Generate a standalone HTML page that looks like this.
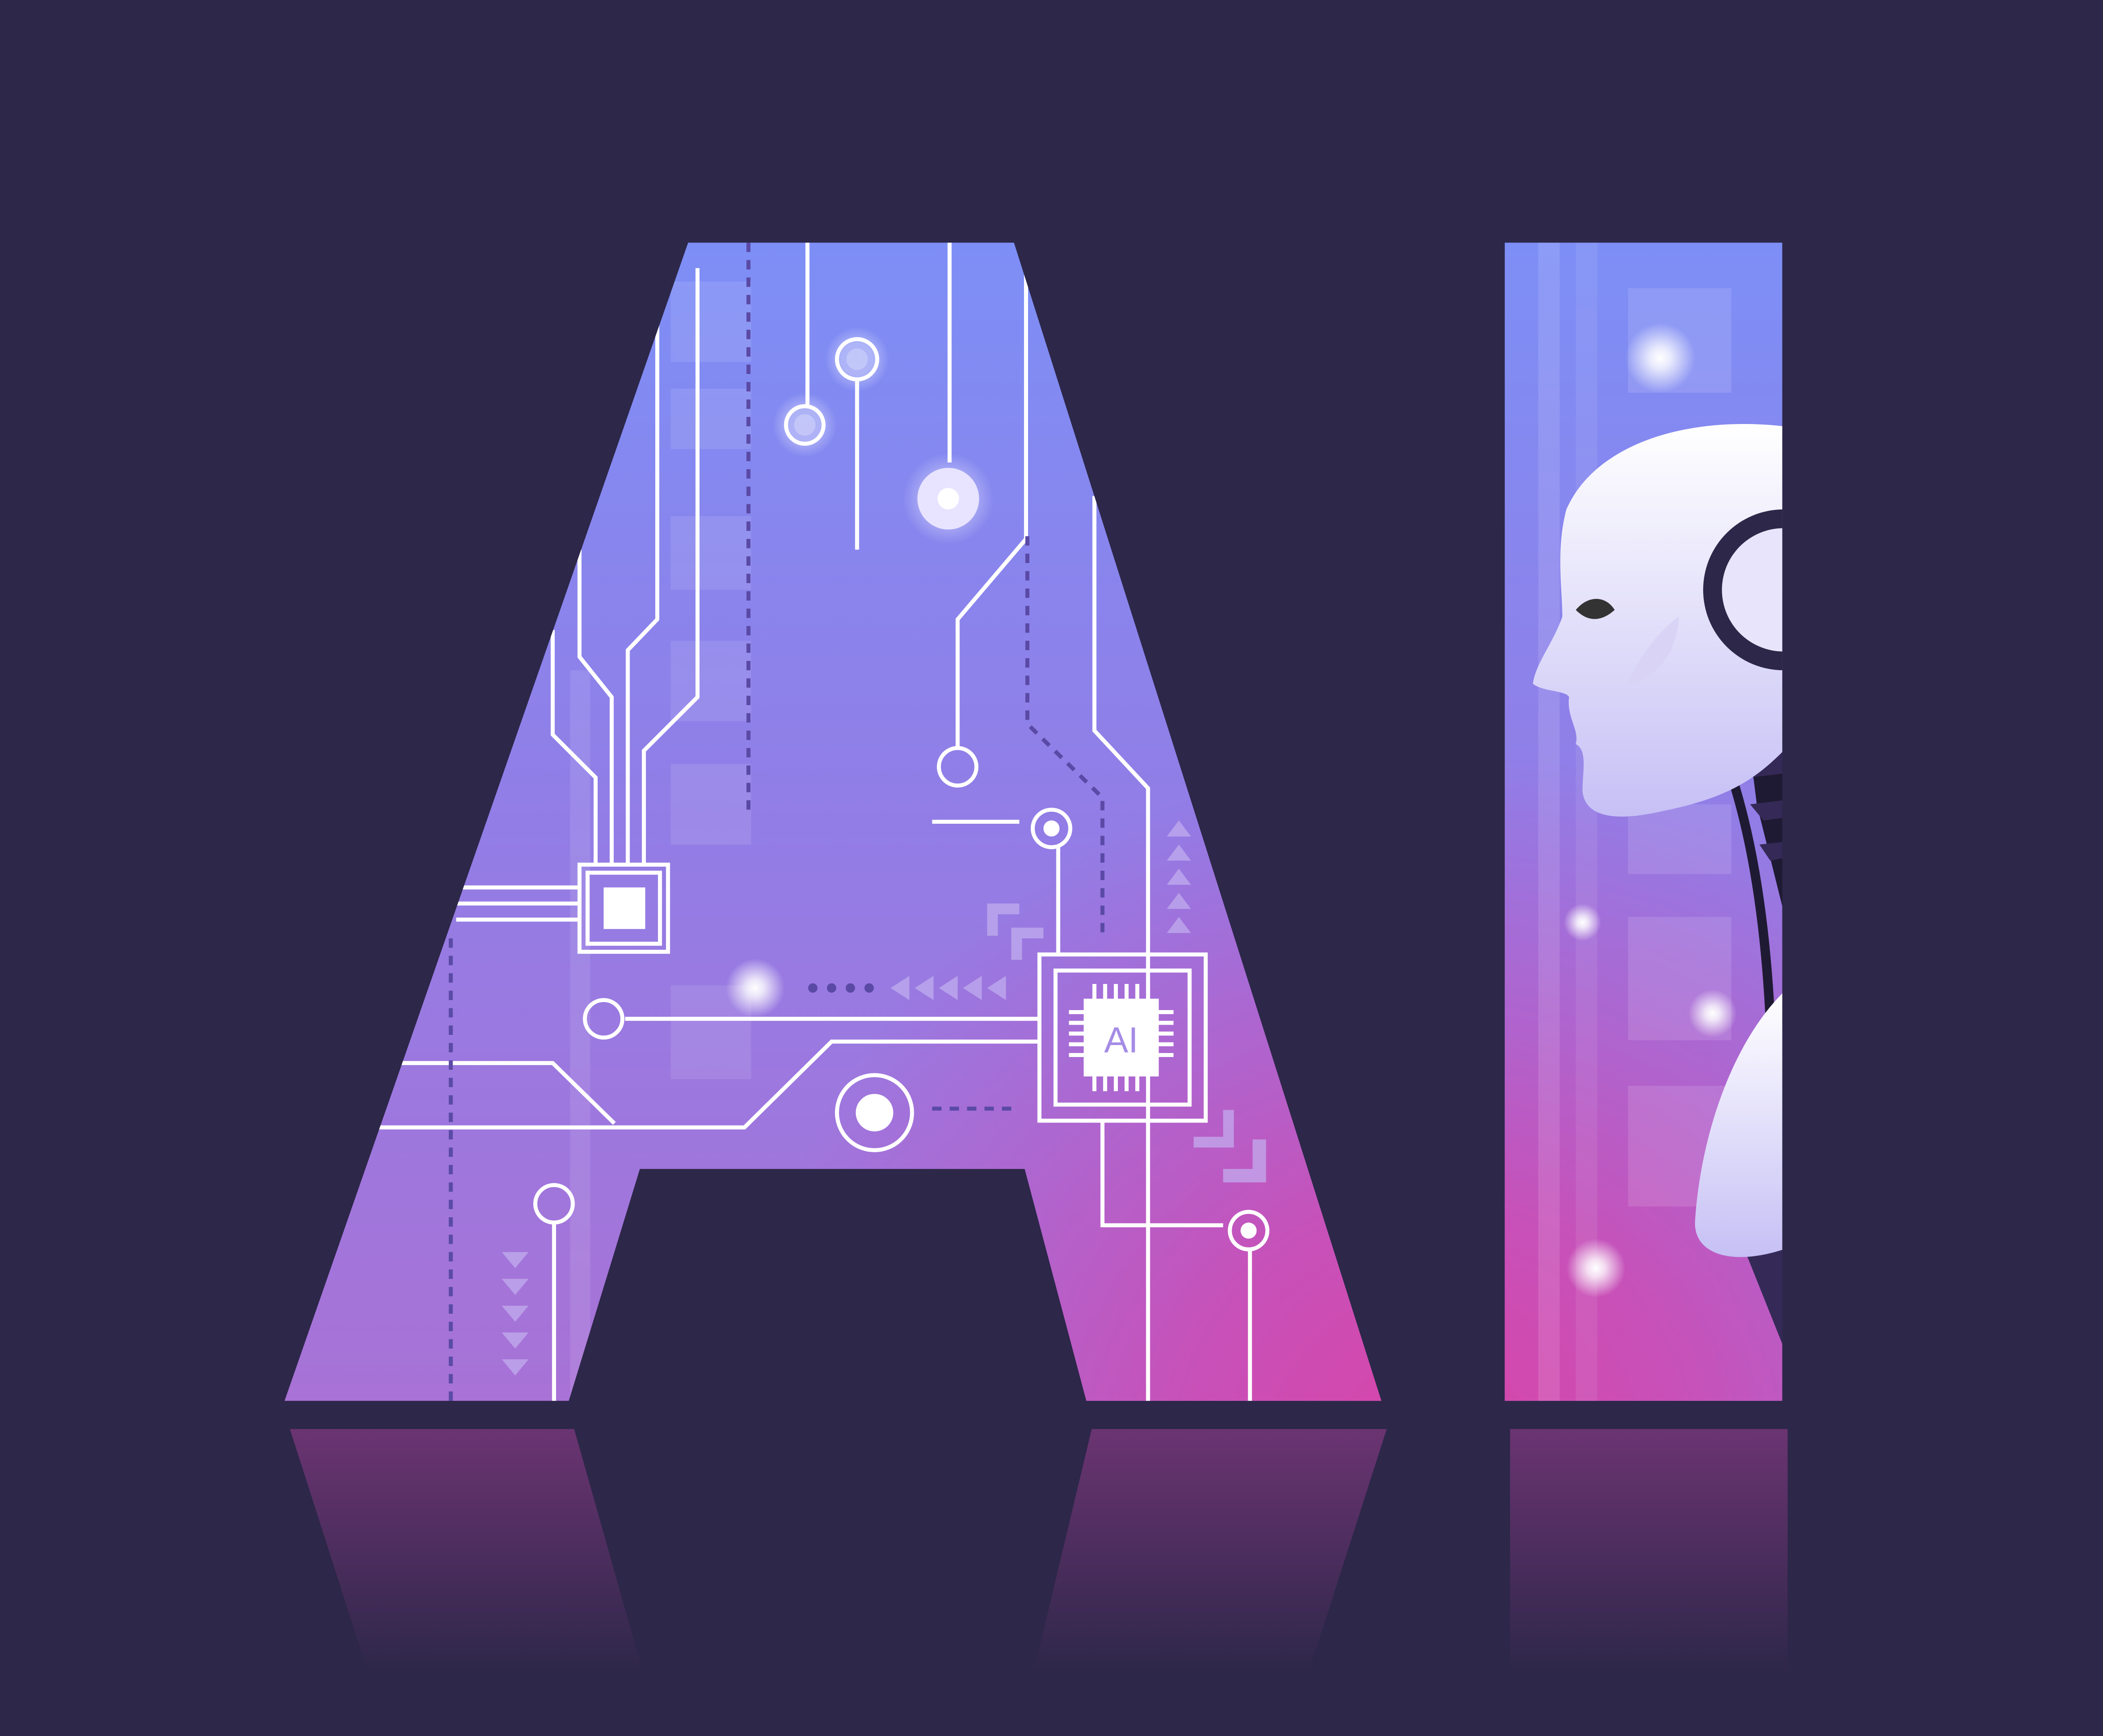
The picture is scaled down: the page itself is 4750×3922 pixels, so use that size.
<!DOCTYPE html>
<html><head><meta charset="utf-8"><style>html,body{margin:0;padding:0;background:#2d2749;overflow:hidden}svg{display:block}</style></head><body>
<svg width="4750" height="3922" viewBox="0 0 1568 1295" xmlns="http://www.w3.org/2000/svg">
<defs>
<linearGradient id="g" gradientUnits="userSpaceOnUse" x1="0" y1="181" x2="0" y2="1045">
<stop offset="0" stop-color="#7d8ff6"/><stop offset="0.5" stop-color="#927de6"/><stop offset="1" stop-color="#a872d6"/>
</linearGradient>
<radialGradient id="pk" gradientUnits="userSpaceOnUse" cx="1070" cy="1080" r="520">
<stop offset="0" stop-color="#d944a8" stop-opacity="1"/><stop offset="0.35" stop-color="#d048b0" stop-opacity="0.8"/><stop offset="1" stop-color="#c24cc0" stop-opacity="0"/>
</radialGradient>
<linearGradient id="r" x1="0" y1="0" x2="0" y2="1">
<stop offset="0" stop-color="#6b3472"/><stop offset="1" stop-color="#2d2749" stop-opacity="1"/>
</linearGradient>
<linearGradient id="h" x1="0" y1="0" x2="0" y2="1">
<stop offset="0" stop-color="#ffffff"/><stop offset="1" stop-color="#c6c0f5"/>
</linearGradient>
<radialGradient id="glow"><stop offset="0" stop-color="#fff"/><stop offset="0.3" stop-color="#fff" stop-opacity="0.8"/><stop offset="1" stop-color="#fff" stop-opacity="0"/></radialGradient>
<radialGradient id="sg"><stop offset="0.5" stop-color="#fff" stop-opacity="0.35"/><stop offset="1" stop-color="#fff" stop-opacity="0"/></radialGradient>
<clipPath id="ca"><path fill-rule="evenodd" d="M513 181 L756 181 L1030 1045 L810 1045 L764 872 L477 872 L424 1045 L212 1045 Z M630 375 L720 712 L525 712 Z"/></clipPath>
<clipPath id="ci"><rect x="1122" y="181" width="207" height="864"/></clipPath>
</defs>
<rect width="1568" height="1295" fill="#2d2749"/>
<path d="M216 1066 L428 1066 L480 1250 L275 1250 Z" fill="url(#r)"/>
<path d="M814 1066 L1034 1066 L975 1250 L770 1250 Z" fill="url(#r)"/>
<rect x="1126" y="1066" width="207" height="184" fill="url(#r)"/>
<!-- A -->
<g clip-path="url(#ca)">
<rect x="200" y="170" width="840" height="890" fill="url(#g)"/>
<rect x="200" y="170" width="840" height="890" fill="url(#pk)"/>
<g fill="#fff" opacity="0.1"><rect x="500" y="210" width="60" height="60"/><rect x="500" y="290" width="60" height="45"/><rect x="500" y="385" width="60" height="55"/><rect x="500" y="478" width="60" height="60"/><rect x="500" y="570" width="60" height="60"/><rect x="500" y="735" width="60" height="70"/><rect x="425" y="500" width="15" height="545"/></g>
<circle cx="600" cy="317" r="24" fill="url(#sg)"/><circle cx="639" cy="268" r="24" fill="url(#sg)"/><circle cx="707" cy="372" r="34" fill="url(#sg)"/>
<g fill="none" stroke="#fff" stroke-width="3">
<path d="M602 181 V303"/><path d="M708 181 V345"/><path d="M639 283 V410"/>
<path d="M765 200 V402 L714 462 V558"/>
<path d="M490 240 V462 L468 485 V645"/><path d="M520 200 V520 L480 560 V645"/>
<path d="M432 410 V490 L456 520 V645"/><path d="M412 470 V548 L444 580 V645"/>
<path d="M816 370 V545 L856 588 V1045"/>
<path d="M695 613 H760"/><path d="M789 632 V712"/>
<path d="M340 662 H432 M340 674 H432 M340 686 H432"/>
<rect x="432" y="645" width="66" height="65"/><rect x="438" y="651" width="54" height="53"/>
<path d="M466 760 H775"/><path d="M282 841 H555 L620 777 H775"/>
<path d="M295 793 H412 L458 838"/>
<rect x="775" y="712" width="124" height="124"/><rect x="787" y="724" width="100" height="100"/>
<path d="M822 836 V914 H912"/><path d="M932 932 V1045"/><path d="M413 912 V1045"/>
</g>
<rect x="450" y="662" width="31" height="31" fill="#fff"/>
<rect x="808" y="745" width="56" height="58" fill="#fff"/>
<g stroke="#fff" stroke-width="3"><path d="M816 734 v12 M824 734 v12 M832 734 v12 M840 734 v12 M848 734 v12 M856 734 v12 M816 802 v12 M824 802 v12 M832 802 v12 M840 802 v12 M848 802 v12 M856 802 v12 M797 755 h12 M797 763 h12 M797 771 h12 M797 779 h12 M797 787 h12 M863 755 h12 M863 763 h12 M863 771 h12 M863 779 h12 M863 787 h12"/></g>
<text x="836" y="785" font-family="Liberation Sans, sans-serif" font-size="27" fill="#a58ce6" text-anchor="middle">AI</text>
<g fill="none" stroke="#fff" stroke-width="3">
<circle cx="600" cy="317" r="14"/><circle cx="639" cy="268" r="15"/><circle cx="714" cy="572" r="14"/>
<circle cx="784" cy="618" r="14"/><circle cx="450" cy="760" r="14"/><circle cx="413" cy="898" r="14"/>
<circle cx="931" cy="918" r="14"/><circle cx="652" cy="830" r="28"/>
</g>
<circle cx="600" cy="317" r="8" fill="#fff" opacity="0.25"/><circle cx="639" cy="268" r="8" fill="#fff" opacity="0.25"/>
<circle cx="652" cy="830" r="14" fill="#fff"/><circle cx="784" cy="618" r="6" fill="#fff"/><circle cx="931" cy="918" r="6" fill="#fff"/>
<circle cx="707" cy="372" r="23" fill="#e8e4ff"/><circle cx="707" cy="372" r="8" fill="#fff"/>
<circle cx="563" cy="737" r="22" fill="url(#glow)"/>
<g stroke="#5a4aa6" stroke-width="3" stroke-dasharray="7 6" fill="none">
<path d="M558 181 V610"/><path d="M336 700 V1045"/><path d="M766 400 V540 L822 595 V700"/><path d="M695 827 H760"/>
</g>
<g fill="#c3b0f0" opacity="0.7"><path d="M664 737 l14 -9 v18z M682 737 l14 -9 v18z M700 737 l14 -9 v18z M718 737 l14 -9 v18z M736 737 l14 -9 v18z"/>
<path d="M374 934 h20 l-10 12z M374 954 h20 l-10 12z M374 974 h20 l-10 12z M374 994 h20 l-10 12z M374 1014 h20 l-10 12z"/>
<path d="M870 624 h18 l-9 -12z M870 642 h18 l-9 -12z M870 660 h18 l-9 -12z M870 678 h18 l-9 -12z M870 696 h18 l-9 -12z"/>
<path d="M736 674 h24 v8 h-16 v16 h-8z M754 692 h24 v8 h-16 v16 h-8z M890 848 h22 v-20 h8 v28 h-30z M912 872 h22 v-22 h10 v32 h-32z"/></g>
<g fill="#5a4aa6"><circle cx="606" cy="737" r="3.5"/><circle cx="620" cy="737" r="3.5"/><circle cx="634" cy="737" r="3.5"/><circle cx="648" cy="737" r="3.5"/></g>
</g>
<!-- I -->
<g clip-path="url(#ci)">
<rect x="1122" y="181" width="207" height="864" fill="url(#g)"/>
<rect x="1122" y="181" width="207" height="864" fill="url(#pk)"/>
<rect x="1147" y="181" width="16" height="864" fill="#fff" opacity="0.12"/>
<rect x="1175" y="181" width="16" height="864" fill="#fff" opacity="0.08"/>
<g fill="#fff" opacity="0.12"><rect x="1214" y="215" width="77" height="78"/><rect x="1214" y="600" width="77" height="52"/><rect x="1214" y="684" width="77" height="92"/><rect x="1214" y="810" width="77" height="90"/></g>
<circle cx="1238" cy="267" r="26" fill="url(#glow)"/><circle cx="1180" cy="688" r="14" fill="url(#glow)"/>
<circle cx="1277" cy="756" r="18" fill="url(#glow)"/><circle cx="1190" cy="946" r="22" fill="url(#glow)"/>
<!-- neck -->
<path d="M1300 520 L1330 520 L1330 680 L1310 600 Z" fill="#1f1a33"/>
<path d="M1295 563 L1330 560 V577 L1305 580 Z M1305 600 L1330 597 V610 L1315 612 Z M1312 630 L1330 628 V640 L1320 642 Z" fill="#352a57"/>
<path d="M1290 575 C1305 620 1316 680 1320 760" stroke="#1f1a33" stroke-width="7" fill="none"/>
<path d="M1300 930 L1330 1005 V930 Z" fill="#352a57"/>
<path d="M1330 740 C1290 780 1268 850 1264 910 C1262 935 1290 945 1330 932 Z" fill="url(#h)"/>
<path d="M1330 318 C1260 310 1190 330 1168 380 C1160 410 1165 440 1165 460 C1158 480 1145 495 1143 510 C1150 516 1168 515 1170 520 C1168 535 1178 545 1175 555 C1184 560 1180 575 1180 590 C1182 612 1210 612 1240 605 C1290 595 1310 580 1330 560 Z" fill="url(#h)"/>
<path d="M1212 512 C1225 485 1240 468 1252 460 C1250 490 1235 505 1212 512 Z" fill="#d9d4f6"/>
<path d="M1175 455 C1185 443 1198 445 1204 455 C1195 463 1185 465 1175 455 Z" fill="#333"/>
<circle cx="1330" cy="440" r="60" fill="#2d2749"/><circle cx="1330" cy="440" r="46" fill="#e8e4fb"/>
</g>
</svg>
</body></html>
